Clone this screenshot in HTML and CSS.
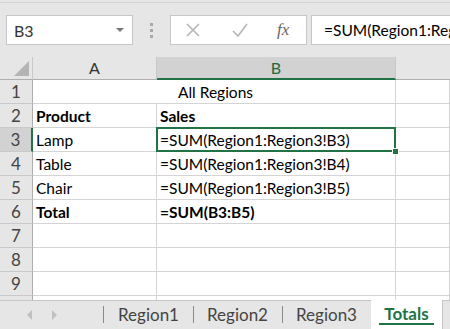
FILE: index.html
```html
<!DOCTYPE html>
<html lang="en">
<head>
    <meta charset="UTF-8">
    <title>Totals</title>
    <link rel="stylesheet" href="styles.css">
</head>
<body>

    <div class="formula-bar">
        <div class="namebox">
            <span>B3</span>
            <span class="caret"></span>
        </div>
        <div class="grip"><i></i><i></i><i></i></div>
        <div class="fx-buttons">
            <svg width="16" height="16" viewBox="0 0 16 16"><path d="M2 2 L14 14 M14 2 L2 14" stroke="#b5b5b5" stroke-width="1.6" fill="none"/></svg>
            <svg width="18" height="16" viewBox="0 0 18 16"><path d="M2 9 L7 14 L16 2" stroke="#b5b5b5" stroke-width="1.6" fill="none"/></svg>
            <span class="fx">fx</span>
        </div>
        <div class="formula">=SUM(Region1:Region3!B3)</div>
    </div>

    <div class="sheet">
        <div class="hd corner"><span class="tri"></span></div>
        <div class="hd">A</div>
        <div class="hd sel-col">B</div>
        <div class="hd blank"></div>

        <div class="rh">1</div>
        <div class="cell span2 center">All Regions</div>
        <div class="cell"></div>

        <div class="rh">2</div>
        <div class="cell b">Product</div>
        <div class="cell b">Sales</div>
        <div class="cell"></div>

        <div class="rh sel-row">3</div>
        <div class="cell">Lamp</div>
        <div class="cell active">=SUM(Region1:Region3!B3)</div>
        <div class="cell"></div>

        <div class="rh">4</div>
        <div class="cell">Table</div>
        <div class="cell">=SUM(Region1:Region3!B4)</div>
        <div class="cell"></div>

        <div class="rh">5</div>
        <div class="cell">Chair</div>
        <div class="cell">=SUM(Region1:Region3!B5)</div>
        <div class="cell"></div>

        <div class="rh">6</div>
        <div class="cell b">Total</div>
        <div class="cell b">=SUM(B3:B5)</div>
        <div class="cell"></div>

        <div class="rh">7</div><div class="cell"></div><div class="cell"></div><div class="cell"></div>
        <div class="rh">8</div><div class="cell"></div><div class="cell"></div><div class="cell"></div>
        <div class="rh">9</div><div class="cell"></div><div class="cell"></div><div class="cell"></div>
        <div class="rh part"></div><div class="cell part"></div><div class="cell part"></div><div class="cell part"></div>
    </div>

    <div class="tabs">
        <div class="nav">
            <span class="arrow left"></span>
            <span class="arrow right"></span>
        </div>
        <div class="tab">Region1</div>
        <div class="tab">Region2</div>
        <div class="tab">Region3</div>
        <div class="tab current">Totals</div>
    </div>

</body>
</html>
```

FILE: styles.css
```css
body {
    margin: 0;
    width: 450px;
    height: 329px;
    overflow: hidden;
    background: #e6e6e6;
    font-family: Lato, "Open Sans", sans-serif;
    color: #000;
}

/* formula bar */

.formula-bar {
    margin-top: 2px;
    height: 55px;
    box-sizing: border-box;
    border-top: 1px solid #d3d3d3;
    padding: 12px 0 0 6px;
    display: flex;
    align-items: flex-start;
}

.namebox {
    width: 127px;
    height: 30px;
    box-sizing: border-box;
    background: #fff;
    border: 1px solid #c6c6c6;
    display: flex;
    align-items: center;
    justify-content: space-between;
    padding: 0 8px 0 7px;
    font-size: 16px;
    color: #333;
}

.caret {
    width: 0;
    height: 0;
    border-left: 4px solid transparent;
    border-right: 4px solid transparent;
    border-top: 4px solid #777;
}

.grip {
    width: 37px;
    height: 30px;
    display: flex;
    flex-direction: column;
    align-items: center;
    justify-content: center;
    gap: 3px;
}

.grip i {
    width: 3px;
    height: 3px;
    background: #a8a8a8;
}

.fx-buttons {
    width: 137px;
    height: 30px;
    box-sizing: border-box;
    background: #fff;
    border: 1px solid #c6c6c6;
    display: flex;
    align-items: center;
    padding-left: 14px;
    gap: 30px;
}

.fx {
    font-family: "Liberation Serif", serif;
    font-style: italic;
    font-size: 17px;
    color: #666;
    margin-left: -2px;
}

.formula {
    flex: 1;
    margin-left: 4px;
    height: 30px;
    box-sizing: border-box;
    background: #fff;
    border: 1px solid #c6c6c6;
    border-right: none;
    padding-left: 12px;
    line-height: 28px;
    font-size: 15.5px;
    white-space: nowrap;
    overflow: hidden;
}

/* grid */

.sheet {
    display: grid;
    grid-template-columns: 33px 124px 239px 54px;
    grid-template-rows: 23px repeat(9, 24px) 4px;
    background: #fff;
}

.hd {
    background: #e6e6e6;
    border-right: 1px solid #c9c9c9;
    border-bottom: 1px solid #aeaeae;
    box-sizing: border-box;
    text-align: center;
    font-size: 16px;
    line-height: 22px;
    color: #333;
}

.hd.blank {
    border-right: none;
}

.corner {
    position: relative;
}

.tri {
    position: absolute;
    right: 3px;
    bottom: 3px;
    width: 0;
    height: 0;
    border-left: 15px solid transparent;
    border-bottom: 15px solid #b4b4b4;
}

.sel-col {
    background: #d2d2d2;
    color: #1e6b40;
    border-bottom: 2px solid #217346;
}

.rh {
    background: #e6e6e6;
    border-right: 1px solid #aeaeae;
    border-bottom: 1px solid #c9c9c9;
    box-sizing: border-box;
    text-align: center;
    font-size: 17px;
    line-height: 23px;
    color: #444;
}

.sel-row {
    background: #d2d2d2;
    border-right: 2px solid #217346;
}

.cell {
    border-right: 1px solid #d4d4d4;
    border-bottom: 1px solid #d4d4d4;
    box-sizing: border-box;
    padding-left: 3px;
    font-size: 15.5px;
    line-height: 24px;
    white-space: nowrap;
    overflow: hidden;
}

.span2 {
    grid-column: span 2;
}

.center {
    text-align: center;
}

.b {
    font-weight: bold;
}

.part {
    border-bottom: none;
}

.active {
    position: relative;
    overflow: visible;
}

.active::after {
    content: "";
    position: absolute;
    left: -1px;
    top: -1px;
    right: -1px;
    bottom: -1px;
    border: 2px solid #217346;
}

.active::before {
    content: "";
    position: absolute;
    right: -4px;
    bottom: -4px;
    width: 5px;
    height: 5px;
    background: #217346;
    border: 1px solid #fff;
    z-index: 1;
}

/* sheet tabs */

.tabs {
    height: 28px;
    border-top: 1px solid #c6c6c6;
    display: flex;
    align-items: stretch;
    font-size: 17px;
    color: #444;
}

.nav {
    width: 104px;
    display: flex;
    align-items: center;
    gap: 20px;
    padding-left: 27px;
    box-sizing: border-box;
    border-right: 1px solid #8a8a8a;
    margin: 5px 0 6px;
}

.arrow {
    width: 0;
    height: 0;
    border-top: 5px solid transparent;
    border-bottom: 5px solid transparent;
}

.arrow.left {
    border-right: 5px solid #c0c0c0;
}

.arrow.right {
    border-left: 5px solid #c0c0c0;
}

.tab {
    width: 89px;
    text-align: center;
    line-height: 28px;
    position: relative;
}

.tab + .tab::before {
    content: "";
    position: absolute;
    left: 0;
    top: 5px;
    bottom: 6px;
    border-left: 1px solid #8a8a8a;
}

.tab.current {
    width: 72px;
    margin-top: -1px;
    background: #fff;
    color: #217346;
    font-weight: bold;
    border-right: 1px solid #c6c6c6;
    box-sizing: border-box;
}

.tab.current::before {
    display: none;
}

.tab.current::after {
    content: "";
    position: absolute;
    left: 8px;
    right: 8px;
    bottom: 4px;
    border-bottom: 2px solid #217346;
}
```
